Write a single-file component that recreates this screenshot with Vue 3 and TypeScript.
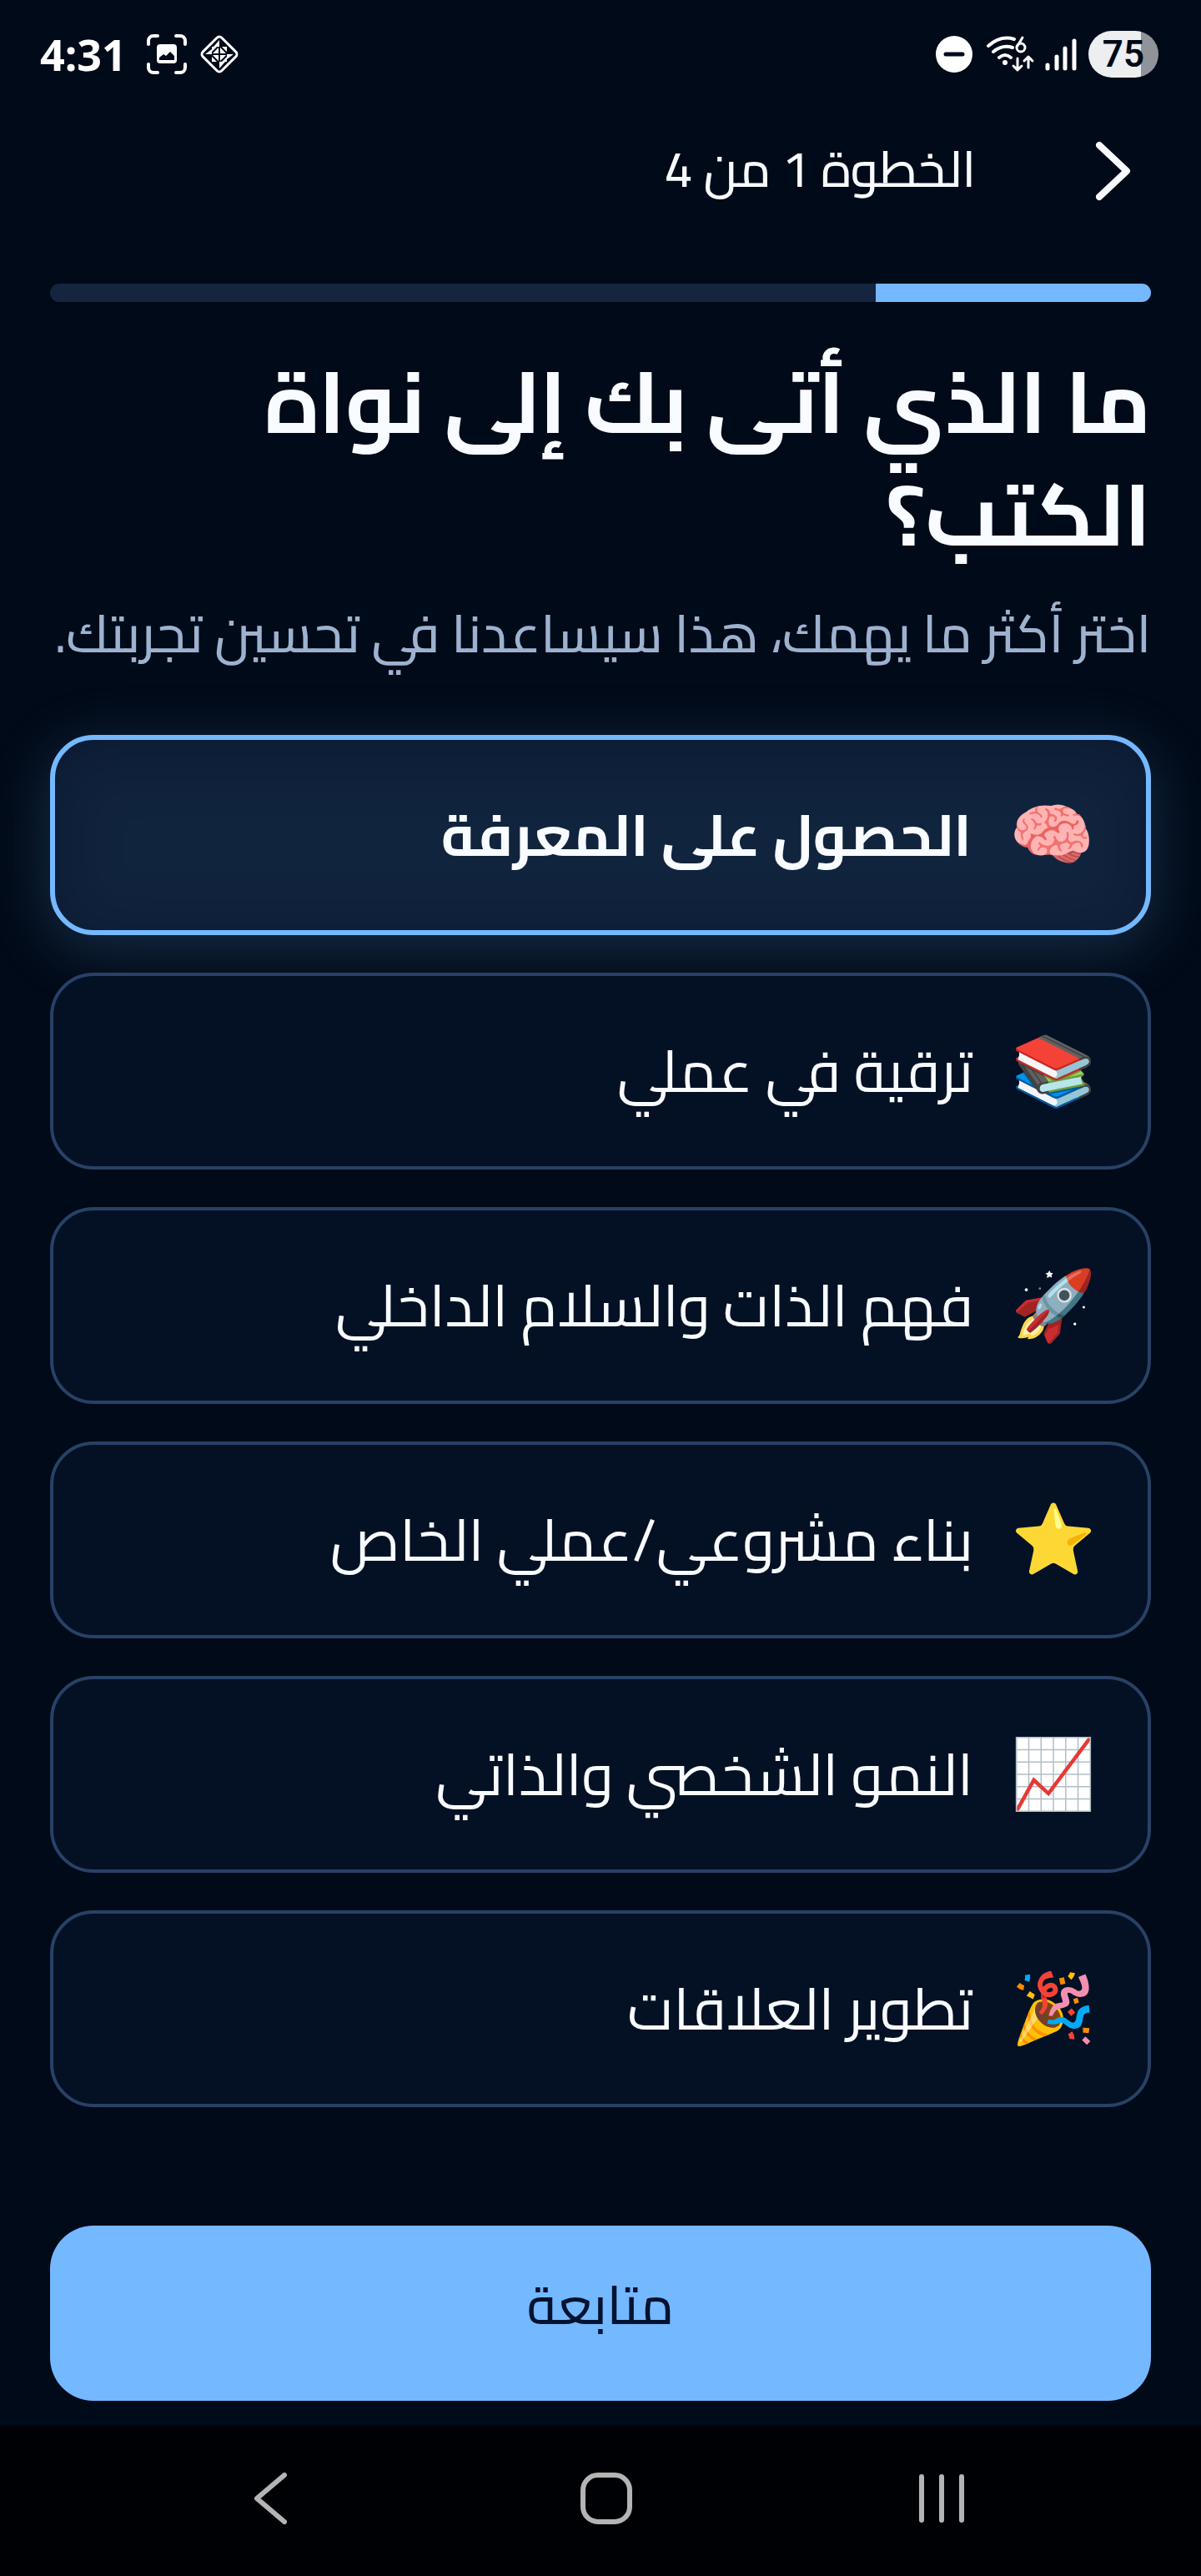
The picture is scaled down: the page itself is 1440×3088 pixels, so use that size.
<script setup lang="ts">
import { ref } from 'vue'

interface Goal {
  id: string
  emoji: string
  label: string
}

const goals: Goal[] = [
  { id: 'knowledge', emoji: '🧠', label: 'الحصول على المعرفة' },
  { id: 'career', emoji: '📚', label: 'ترقية في عملي' },
  { id: 'peace', emoji: '🚀', label: 'فهم الذات والسلام الداخلي' },
  { id: 'business', emoji: '⭐', label: 'بناء مشروعي/عملي الخاص' },
  { id: 'growth', emoji: '📈', label: 'النمو الشخصي والذاتي' },
  { id: 'relations', emoji: '🎉', label: 'تطوير العلاقات' },
]

const step = 1
const totalSteps = 4
const selected = ref<string>('knowledge')
</script>

<template>
  <div class="screen" dir="rtl">
    <div class="status" dir="ltr">
      <div class="status-side">
        <span class="clock">4:31</span>
        <svg class="i-capture" viewBox="0 0 48 48" fill="none" stroke="#fff" stroke-width="4" stroke-linecap="round">
          <path d="M2 12V8a6 6 0 0 1 6-6h5M35 2h5a6 6 0 0 1 6 6v4M46 36v4a6 6 0 0 1-6 6h-5M13 46H8a6 6 0 0 1-6-6v-4" />
          <path fill="#fff" stroke="none" fill-rule="evenodd" d="M16 12h16a4 4 0 0 1 4 4v15a4 4 0 0 1-4 4H16a4 4 0 0 1-4-4V16a4 4 0 0 1 4-4zM15 28v3h18v-5l-5-5-5 5-3-2z" />
        </svg>
        <svg class="i-diamond" viewBox="0 0 50 50">
          <rect x="9" y="9" width="32" height="32" rx="4" fill="none" stroke="#fff" stroke-width="3" transform="rotate(45 25 25)" />
          <g fill="#fff">
            <path d="M25 8v8h-7zM25 42v-8h7zM8 25l8-6v6zM42 25h-8v6z" />
            <path d="M24 17v7h-7zM33 24h-7v-7zM26 33v-7h7zM17 26h7v7z" />
            <path d="M28 16h6v6zM16 28v6h6zM34 28v6h-6zM16 16h6l-6 6z" />
          </g>
        </svg>
      </div>
      <div class="status-side">
        <svg class="i-dnd" viewBox="0 0 44 44">
          <circle cx="22" cy="22" r="22" fill="#fff" />
          <path d="M12 22h20" stroke="#000a18" stroke-width="5" stroke-linecap="round" />
        </svg>
        <svg class="i-wifi" viewBox="0 0 60 46" fill="none" stroke="#fff" stroke-width="4" stroke-linecap="round" stroke-linejoin="round">
          <path d="M3 13Q18 0 34 5M9 20Q20 11 32 15M16 27Q23 21 30 27" />
          <circle cx="23" cy="33" r="3" fill="#fff" stroke="none" />
          <path stroke-width="3" d="M44 3l-6 10" />
          <circle cx="42" cy="15" r="5" stroke-width="3" />
          <path stroke-width="3" d="M38 28v14M33 37l5 5 5-5M51 39V26M46 31l5-5 5 5" />
        </svg>
        <svg class="i-signal" viewBox="0 0 38 40" stroke="#fff" stroke-width="5" stroke-linecap="round">
          <path d="M3 33v4M14 23v14M24 13v24M35 4v33" />
        </svg>
        <span class="battery">75</span>
      </div>
    </div>

    <header class="top">
      <button class="back" type="button" aria-label="رجوع">
        <svg viewBox="0 0 42 72" fill="none" stroke="#f8fbff" stroke-width="8" stroke-linecap="round" stroke-linejoin="round">
          <path d="M4 5l33 31L4 67" />
        </svg>
      </button>
      <span class="step">الخطوة {{ step }} من {{ totalSteps }}</span>
    </header>

    <main class="content">
      <div class="track" role="progressbar" :aria-valuenow="step" aria-valuemin="0" :aria-valuemax="totalSteps">
        <div class="fill" :style="{ width: (step / totalSteps) * 100 + '%' }"></div>
      </div>
      <h1>ما الذي أتى بك إلى نواة الكتب؟</h1>
      <p class="lead">اختر أكثر ما يهمك، هذا سيساعدنا في تحسين تجربتك.</p>

      <div class="goals" role="radiogroup">
        <label v-for="goal in goals" :key="goal.id" class="goal" :class="{ chosen: selected === goal.id }">
          <input v-model="selected" type="radio" name="goal" :value="goal.id" />
          <span class="emoji" aria-hidden="true">{{ goal.emoji }}</span>
          <span class="label">{{ goal.label }}</span>
        </label>
      </div>

      <button class="next" type="button">متابعة</button>
    </main>

    <nav class="system" dir="ltr">
      <button type="button" aria-label="Back">
        <svg viewBox="0 0 62 62"><path d="M47 3L14 31l33 28" /></svg>
      </button>
      <button type="button" aria-label="Home">
        <svg viewBox="0 0 62 62"><rect x="3" y="3" width="56" height="56" rx="18" /></svg>
      </button>
      <button type="button" aria-label="Recents">
        <svg viewBox="0 0 62 62"><path d="M7 5v52M31 5v52M55 5v52" /></svg>
      </button>
    </nav>
  </div>
</template>

<style>
body {
  margin: 0;
  background: #000a18;
}
</style>

<style scoped>
.screen {
  display: flex;
  flex-direction: column;
  min-height: 100vh;
  background: #000a18;
  color: #f8fbff;
  font-family: Cairo, 'DejaVu Sans', sans-serif;
}

svg {
  display: block;
  flex: none;
}

button {
  border: 0;
  padding: 0;
  background: none;
  color: inherit;
  font: inherit;
}

.status {
  display: flex;
  justify-content: space-between;
  align-items: center;
  height: 130px;
  padding: 0 51px 0 48px;
}

.status-side {
  display: flex;
  align-items: center;
}

.clock {
  font-family: 'Noto Sans', sans-serif;
  font-weight: 700;
  font-size: 52px;
  line-height: 60px;
  color: #fff;
}

.i-capture {
  width: 48px;
  height: 48px;
  margin-left: 24px;
}

.i-diamond {
  width: 50px;
  height: 50px;
  margin-left: 14px;
}

.i-dnd {
  width: 44px;
  height: 44px;
}

.i-wifi {
  width: 60px;
  height: 46px;
  margin-left: 16px;
}

.i-signal {
  width: 38px;
  height: 40px;
  margin-left: 11px;
}

.battery {
  box-sizing: border-box;
  width: 84px;
  height: 56px;
  margin-left: 14px;
  border-radius: 28px;
  background: linear-gradient(90deg, #eceef0 75%, #909399 75%);
  color: #000a18;
  font-family: Roboto, sans-serif;
  font-weight: 600;
  font-size: 44px;
  line-height: 56px;
  text-align: center;
}

.top {
  display: flex;
  align-items: center;
  height: 150px;
  padding: 0 60px;
}

.back {
  width: 210px;
  padding-inline-start: 24px;
}

.back svg {
  width: 42px;
  height: 72px;
}

.step {
  padding-bottom: 6px;
  font-size: 60px;
  line-height: 90px;
  font-weight: 500;
}

.content {
  display: flex;
  flex-direction: column;
  flex: 1;
  padding: 60px 60px 30px;
}

.track {
  height: 22px;
  border-radius: 11px;
  background: #16253f;
  overflow: hidden;
}

.fill {
  height: 100%;
  background: #74b8ff;
}

h1 {
  margin: 52px 0 30px;
  font-size: 103px;
  line-height: 135px;
  font-weight: 700;
}

.lead {
  margin: 0;
  font-size: 63px;
  line-height: 90px;
  font-weight: 500;
  color: #9db2ce;
}

.goals {
  display: flex;
  flex-direction: column;
  gap: 45px;
  margin: 77px 0 60px;
}

.goal {
  display: flex;
  align-items: center;
  gap: 45px;
  padding: 60px 62px;
  border: 4px solid #284166;
  border-radius: 52px;
  background: #041124;
  font-size: 70px;
  line-height: 108px;
}

.goal.chosen {
  border: 6px solid #74b8ff;
  background: #11243d;
  box-shadow:
    0 15px 75px rgba(116, 184, 255, 0.22),
    inset 0 12px 75px rgba(4, 10, 34, 0.4);
  font-size: 69px;
  font-weight: 700;
}

.goal input {
  position: absolute;
  opacity: 0;
}

.emoji {
  font-family: 'Noto Color Emoji', sans-serif;
  font-weight: 400;
  font-size: 82px;
}

.next {
  height: 210px;
  margin-top: auto;
  padding-bottom: 20px;
  border-radius: 52px;
  background: #74b8ff;
  color: #001230;
  font-size: 64px;
  line-height: 90px;
  font-weight: 500;
}

.system {
  box-sizing: border-box;
  display: flex;
  justify-content: center;
  gap: 340px;
  align-items: center;
  height: 180px;
  padding: 0 0 6px 14px;
  background: #000104;
}

.system svg {
  width: 62px;
  height: 62px;
  fill: none;
  stroke: #b4b4b6;
  stroke-width: 6;
  stroke-linecap: round;
  stroke-linejoin: round;
}
</style>
